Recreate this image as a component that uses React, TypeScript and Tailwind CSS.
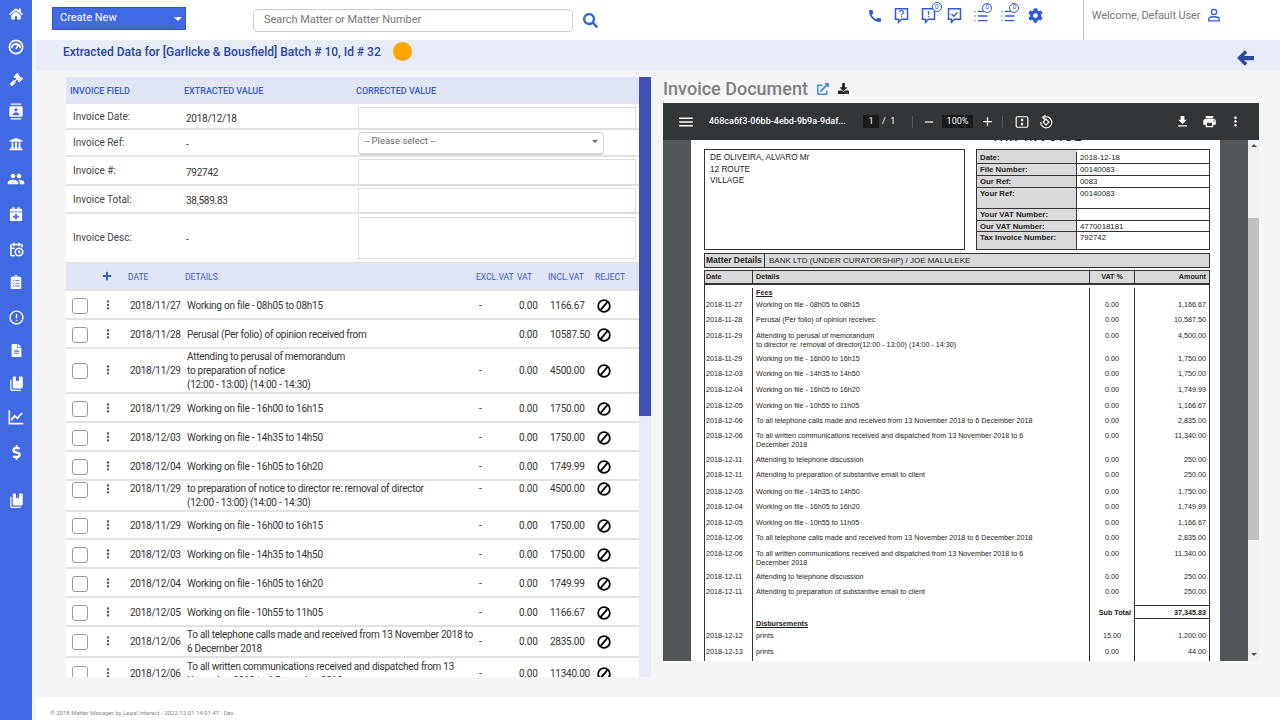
import type { ReactNode } from "react";
import { CalendarClock, List } from "lucide-react";
import {
  FaCalendarPlus,
  FaClipboardList,
  FaCog,
  FaDollarSign,
  FaDownload,
  FaExternalLinkAlt,
  FaFileAlt,
  FaGavel,
  FaHome,
  FaPlus,
  FaSearch,
  FaUniversity,
} from "react-icons/fa";
import {
  MdAdd,
  MdCall,
  MdErrorOutline,
  MdFileDownload,
  MdMenu,
  MdMoreVert,
  MdPeople,
  MdPrint,
  MdRemove,
} from "react-icons/md";

function GaugeIcon() {
  return (
    <svg width="16" height="16" viewBox="0 0 24 24" fill="none" stroke="white">
      <circle cx="12" cy="12" r="10" strokeWidth="2.5" />
      <path d="M5.5 14a6.5 6.5 0 0 1 13 0" strokeWidth="3" />
      <path d="M12 15l3-6" strokeWidth="2.5" />
    </svg>
  );
}

function ContactBookIcon() {
  return (
    <svg width="16" height="17" viewBox="0 0 24 24" fill="white">
      <path d="M4 0h16v2H4zM4 22h16v2H4z" />
      <path
        fillRule="evenodd"
        d="M4 4h16a2 2 0 0 1 2 2v12a2 2 0 0 1-2 2H4a2 2 0 0 1-2-2V6a2 2 0 0 1 2-2zm8 3a2.5 2.5 0 1 0 0 5 2.5 2.5 0 0 0 0-5zm-5 9v1.5h10V16c0-1.5-3-2.5-5-2.5S7 14.500 7 16z"
      />
    </svg>
  );
}

function DocsIcon() {
  return (
    <svg width="15" height="16" viewBox="0 0 24 24" fill="white">
      <path d="M8 0h3v8l2.500-2L16 8V0h4a2 2 0 0 1 2 2v15a2 2 0 0 1-2 2H8a2 2 0 0 1-2-2V2a2 2 0 0 1 2-2z" />
      <path d="M2 5h2v14a2 2 0 0 0 2 2h13v2H5a3 3 0 0 1-3-3z" />
    </svg>
  );
}

function ChartIcon() {
  return (
    <svg width="16" height="16" viewBox="0 0 24 24" fill="none" stroke="white" strokeWidth="2.500">
      <path d="M2 2v20h21" />
      <path d="M5 17l5-7 4 4 7-8" />
    </svg>
  );
}

function BubbleIcon({ children }: { children: ReactNode }) {
  return (
    <svg width="15" height="17" viewBox="0 0 20 22" fill="none" stroke="#2f5bd8" strokeWidth="2">
      <path d="M2 2h16v14H10l-4 4v-4H2z" />
      {children}
    </svg>
  );
}

function BanIcon() {
  return (
    <svg width="14" height="14" viewBox="0 0 24 24" fill="none" stroke="black" strokeWidth="3">
      <circle cx="12" cy="12" r="10" />
      <path d="M6 19L18 5" />
    </svg>
  );
}

function FitIcon() {
  return (
    <svg width="14" height="14" viewBox="0 0 24 24" fill="none" stroke="white" strokeWidth="2">
      <rect x="2" y="3" width="20" height="18" rx="2" />
      <path d="M12 6v3M10 8l2 2 2-2M12 18v-3M10 16l2-2 2 2" />
    </svg>
  );
}

function RotateIcon() {
  return (
    <svg width="14" height="15" viewBox="0 0 24 24" fill="none" stroke="white" strokeWidth="2">
      <path d="M8 5a9.500 9.500 0 1 1-5 8" />
      <path d="M11 1L6 5l5 4" />
      <rect x="8.500" y="9.500" width="7" height="7" transform="rotate(45 12 13)" />
    </svg>
  );
}

function BackArrow() {
  return (
    <svg width="17" height="18" viewBox="0 0 24 24" fill="#2a4aa5" className="ml-auto mr-[26px] mt-[9px]">
      <path d="M11 1L0 12l11 11 3.500-3.500L10 15h14V9H10l4.500-4.500z" />
    </svg>
  );
}

function Badge({ cls }: { cls: string }) {
  return (
    <span className={`absolute -top-[5px] flex h-[10px] w-[10px] items-center justify-center rounded-full border border-[#2f5bd8] bg-white text-[7px] leading-none ${cls}`}>
      0
    </span>
  );
}

const nav = [
  { icon: <FaHome size={14} />, cls: "h-[28px]" },
  { icon: <GaugeIcon />, cls: "h-[32px] mt-[3px]" },
  { icon: <FaGavel size={13} />, cls: "h-[32px]" },
  { icon: <ContactBookIcon />, cls: "h-[32px]" },
  { icon: <FaUniversity size={14} />, cls: "h-[32px] mt-[1px]" },
  { icon: <MdPeople size={18} />, cls: "h-[32px] mt-[3px]" },
  { icon: <FaCalendarPlus size={14} />, cls: "h-[32px] mt-[3px]" },
  { icon: <CalendarClock size={15} strokeWidth={2.5} />, cls: "h-[32px] mt-[3px]" },
  { icon: <FaClipboardList size={14} />, cls: "h-[32px] mt-[1px]" },
  { icon: <MdErrorOutline size={17} />, cls: "h-[32px] mt-[3px]" },
  { icon: <FaFileAlt size={13} />, cls: "h-[32px] mt-[1px]" },
  { icon: <DocsIcon />, cls: "h-[32px] mt-[2px]" },
  { icon: <ChartIcon />, cls: "h-[32px] mt-[1px]" },
  { icon: <FaDollarSign size={15} />, cls: "h-[32px] mt-[3px]" },
  { icon: <DocsIcon />, cls: "h-[32px] mt-[17px]" },
];

const lines = [
  { date: "2018/11/27", details: ["Working on file - 08h05 to 08h15"], excl: "-", incl: "1166.67", cls: "h-[29px] items-center pt-[2px]" },
  { date: "2018/11/28", details: ["Perusal (Per folio) of opinion received from"], excl: "", incl: "10587.50", cls: "h-[29px] items-center pt-[2px]" },
  { date: "2018/11/29", details: ["Attending to perusal of memorandum", "to preparation of notice", "(12:00 - 13:00) (14:00 - 14:30)"], excl: "-", incl: "4500.00", cls: "h-[45px] items-center" },
  { date: "2018/11/29", details: ["Working on file - 16h00 to 16h15"], excl: "-", incl: "1750.00", cls: "h-[29px] items-center pt-[2px]" },
  { date: "2018/12/03", details: ["Working on file - 14h35 to 14h50"], excl: "-", incl: "1750.00", cls: "h-[29px] items-center pt-[2px]" },
  { date: "2018/12/04", details: ["Working on file - 16h05 to 16h20"], excl: "-", incl: "1749.99", cls: "h-[29px] items-center pt-[2px]" },
  { date: "2018/11/29", details: ["to preparation of notice to director re: removal of director", "(12:00 - 13:00) (14:00 - 14:30)"], excl: "-", incl: "4500.00", cls: "h-[31px] items-start pt-[1px]" },
  { date: "2018/11/29", details: ["Working on file - 16h00 to 16h15"], excl: "-", incl: "1750.00", cls: "h-[28px] items-center pt-[2px]" },
  { date: "2018/12/03", details: ["Working on file - 14h35 to 14h50"], excl: "-", incl: "1750.00", cls: "h-[29px] items-center pt-[2px]" },
  { date: "2018/12/04", details: ["Working on file - 16h05 to 16h20"], excl: "-", incl: "1749.99", cls: "h-[29px] items-center pt-[2px]" },
  { date: "2018/12/05", details: ["Working on file - 10h55 to 11h05"], excl: "-", incl: "1166.67", cls: "h-[29px] items-center pt-[2px]" },
  { date: "2018/12/06", details: ["To all telephone calls made and received from 13 November 2018 to", "6 December 2018"], excl: "-", incl: "2835.00", cls: "h-[31px] items-center" },
  { date: "2018/12/06", details: ["To all written communications received and dispatched from 13", "November 2018 to 6 December 2018"], excl: "-", incl: "11340.00", cls: "h-[33px] items-center" },
];

const pdfRows = [
  { date: "", details: ["Fees"], vat: "", amt: "", cls: "h-[15px] pt-[3px]", head: true },
  { date: "2018-11-27", details: ["Working on file - 08h05 to 08h15"], vat: "0.00", amt: "1,166.67", cls: "h-[15px]" },
  { date: "2018-11-28", details: ["Perusal (Per folio) of opinion receivec"], vat: "0.00", amt: "10,587.50", cls: "h-[16px]" },
  { date: "2018-11-29", details: ["Attending to perusal of memorandum", "to director  re: removal of director(12:00 - 13:00) (14:00 - 14:30)"], vat: "0.00", amt: "4,500.00", cls: "h-[23px]" },
  { date: "2018-11-29", details: ["Working on file - 16h00 to 16h15"], vat: "0.00", amt: "1,750.00", cls: "h-[15px]" },
  { date: "2018-12-03", details: ["Working on file - 14h35 to 14h50"], vat: "0.00", amt: "1,750.00", cls: "h-[16px]" },
  { date: "2018-12-04", details: ["Working on file - 16h05 to 16h20"], vat: "0.00", amt: "1,749.99", cls: "h-[16px]" },
  { date: "2018-12-05", details: ["Working on file - 10h55 to 11h05"], vat: "0.00", amt: "1,166.67", cls: "h-[15px]" },
  { date: "2018-12-06", details: ["To all telephone calls made and received from 13 November 2018 to 6 December 2018"], vat: "0.00", amt: "2,835.00", cls: "h-[15px]" },
  { date: "2018-12-06", details: ["To all written communications received and dispatched from 13 November 2018 to 6", "December 2018"], vat: "0.00", amt: "11,340.00", cls: "h-[24px]" },
  { date: "2018-12-11", details: ["Attending to telephone discussion"], vat: "0.00", amt: "250.00", cls: "h-[15px]" },
  { date: "2018-12-11", details: ["Attending to preparation of substantive email to client"], vat: "0.00", amt: "250.00", cls: "h-[17px]" },
  { date: "2018-12-03", details: ["Working on file - 14h35 to 14h50"], vat: "0.00", amt: "1,750.00", cls: "h-[15px]" },
  { date: "2018-12-04", details: ["Working on file - 16h05 to 16h20"], vat: "0.00", amt: "1,749.99", cls: "h-[16px]" },
  { date: "2018-12-05", details: ["Working on file - 10h55 to 11h05"], vat: "0.00", amt: "1,166.67", cls: "h-[15px]" },
  { date: "2018-12-06", details: ["To all telephone calls made and received from 13 November 2018 to 6 December 2018"], vat: "0.00", amt: "2,835.00", cls: "h-[16px]" },
  { date: "2018-12-06", details: ["To all written communications received and dispatched from 13 November 2018 to 6", "December 2018"], vat: "0.00", amt: "11,340.00", cls: "h-[23px]" },
  { date: "2018-12-11", details: ["Attending to telephone discussion"], vat: "0.00", amt: "250.00", cls: "h-[15px]" },
  { date: "2018-12-11", details: ["Attending to preparation of substantive email to client"], vat: "0.00", amt: "250.00", cls: "h-[18px]" },
];

const pdfTail = [
  { date: "", details: ["Disbursements"], vat: "", amt: "", cls: "h-[12px]", head: true },
  { date: "2018-12-12", details: ["prints"], vat: "15.00", amt: "1,200.00", cls: "h-[16px]" },
  { date: "2018-12-13", details: ["prints"], vat: "0.00", amt: "44.00", cls: "h-[20px]" },
];

const metaRows = [
  { label: "Date:", value: "2018-12-18", cls: "h-[14px] pt-[2px]" },
  { label: "File Number:", value: "00140083", cls: "h-[12px]" },
  { label: "Our Ref:", value: "0083", cls: "h-[12px]" },
  { label: "Your Ref:", value: "00140083", cls: "h-[21px]" },
  { label: "Your VAT Number:", value: "", cls: "h-[12px]" },
  { label: "Our VAT Number:", value: "4770018181", cls: "h-[11px]" },
  { label: "Tax Invoice Number:", value: "792742", cls: "h-[17px]" },
];

function PdfRow({ row }: { row: (typeof pdfRows)[number] }) {
  return (
    <div className={`flex leading-[9.3px] ${row.cls}`}>
      <div className="w-[47px] pl-[1px]">{row.date}</div>
      <div className="w-[337px] border-l border-[#333] pl-[3px]">
        {row.details.map((d) =>
          row.head ? (
            <div key={d} className="font-bold underline">{d}</div>
          ) : (
            <div key={d} className="whitespace-nowrap">{d}</div>
          ),
        )}
      </div>
      <div className="w-[45px] border-l border-[#333] text-center">{row.vat}</div>
      <div className="flex-1 border-l border-[#333] pr-[3px] text-right">{row.amt}</div>
    </div>
  );
}

function FieldRow({
  label,
  value,
  cls,
  labelCls,
  valueCls,
  children,
}: {
  label: string;
  value: string;
  cls: string;
  labelCls: string;
  valueCls: string;
  children: ReactNode;
}) {
  return (
    <div className={`flex border-b-2 border-[#e2e2e2] bg-white text-[10px] text-[#444] ${cls}`}>
      <div className={`w-[120px] pl-[7px] ${labelCls}`}>{label}</div>
      <div className={`w-[172px] text-[10px] tracking-[-0.25px] text-[#333] ${valueCls}`}>{value}</div>
      {children}
    </div>
  );
}

export default function App() {
  return (
    <div className="flex h-[720px] w-[1280px] overflow-hidden bg-[#f5f4f6] font-['Roboto',sans-serif]">
      <aside className="flex w-[32px] shrink-0 flex-col bg-[#4169e1] text-white">
        {nav.map((n, i) => (
          <div key={i} className={`flex items-center justify-center ${n.cls}`}>
            {n.icon}
          </div>
        ))}
      </aside>

      <div className="flex min-w-0 flex-1 flex-col">
        <header className="flex h-[40px] shrink-0 items-start bg-white">
          <button className="ml-[20px] mt-[7px] flex h-[23px] w-[134px] items-center justify-between border border-[#2f55c8] bg-[#4169e1] pl-[7px] pr-[3px] text-[11px] text-white">
            Create New
            <span className="h-0 w-0 border-x-[4px] border-t-[4px] border-x-transparent border-t-white" />
          </button>
          <div className="ml-[67px] mt-[9px] flex h-[23px] w-[320px] items-center rounded border border-[#cfcfcf] pl-[10px] text-[11px] tracking-[-0.05px] text-[#777]">
            Search Matter or Matter Number
          </div>
          <FaSearch size={15} className="ml-[10px] mt-[13px] text-[#2b6fd6]" />

          <div className="ml-[269px] mt-[7px] flex h-[17px] items-center gap-[11.300px] text-[#2f5bd8]">
            <MdCall size={16} />
            <BubbleIcon>
              <path d="M7.500 6.500a2.500 2.500 0 1 1 3.500 2.500c-.7.4-1 .8-1 1.700M10 12v1.500" strokeWidth="1.500" />
            </BubbleIcon>
            <div className="relative">
              <BubbleIcon>
                <path d="M10 5v5M10 11.500v1.500" strokeWidth="1.800" />
              </BubbleIcon>
              <Badge cls="-right-[6px]" />
            </div>
            <BubbleIcon>
              <path d="M6 9l3 3 5-5" strokeWidth="1.800" />
            </BubbleIcon>
            <div className="relative">
              <List size={16} strokeWidth={2} />
              <Badge cls="-right-[3px]" />
            </div>
            <div className="relative">
              <List size={16} strokeWidth={2} />
              <Badge cls="-right-[3px]" />
            </div>
            <FaCog size={15} />
          </div>

          <div className="ml-[40px] flex h-[40px] items-start border-l border-[#bdbdbd] pl-[8px] pt-[8px] text-[11px] tracking-[-0.1px] text-[#777]">
            Welcome, Default User
            <svg width="14" height="14" viewBox="0 0 24 24" fill="none" stroke="#2f5bd8" strokeWidth="2.200" className="ml-[7px]">
              <circle cx="12" cy="7" r="4.500" />
              <path d="M3 22v-3c0-2.500 4-4 9-4s9 1.500 9 4v3z" />
            </svg>
          </div>
        </header>

        <div className="ml-[4px] flex h-[30px] shrink-0 bg-[#e8ecf6]">
          <h1 className="ml-[27px] mt-[4px] text-[12px] font-medium leading-[17px] text-[#2446a8]">
            Extracted Data for [Garlicke &amp; Bousfield] Batch # 10, Id # 32
          </h1>
          <span className="ml-[12px] mt-[2px] h-[19px] w-[19px] rounded-full bg-[#ffa500]" />
          <BackArrow />
        </div>

        <main className="ml-[4px] flex min-h-0 flex-1 pl-[30px] pt-[7px]">
          <section className="flex h-[600px] w-[585px] shrink-0">
            <div className="h-[600px] w-[573px] overflow-hidden bg-white">
              <div className="flex h-[27px] items-center border-b-2 border-[#e2e2e2] bg-[#dfe5f5] pl-[4px] pt-[5px] text-[9px] font-medium text-[#3b5bcc]">
                <span className="w-[114px]">INVOICE FIELD</span>
                <span className="w-[172px]">EXTRACTED VALUE</span>
                <span>CORRECTED VALUE</span>
              </div>

              <FieldRow label="Invoice Date:" value="2018/12/18" cls="h-[26px]" labelCls="pt-[5px]" valueCls="pt-[7px]">
                <input className="mt-[3px] h-[22px] w-[278px] border border-[#dcdcdc] bg-white" />
              </FieldRow>
              <FieldRow label="Invoice Ref:" value="-" cls="h-[27px]" labelCls="pt-[5px]" valueCls="pt-[7px]">
                <div className="mt-[2px] flex h-[23px] w-[246px] items-center justify-between rounded border border-b-2 border-[#d4d4d4] pb-[3px] pl-[5px] pr-[5px] text-[9.500px] text-[#666]">
                  -- Please select --
                  <span className="h-0 w-0 border-x-[3px] border-t-[3px] border-x-transparent border-t-[#666]" />
                </div>
              </FieldRow>
              <FieldRow label="Invoice #:" value="792742" cls="h-[29px]" labelCls="pt-[6px]" valueCls="pt-[8px]">
                <input className="mt-[2px] h-[26px] w-[278px] border border-[#dcdcdc] bg-white" />
              </FieldRow>
              <FieldRow label="Invoice Total:" value="38,589.83" cls="h-[28px]" labelCls="pt-[6px]" valueCls="pt-[7px]">
                <input className="mt-[2px] h-[25px] w-[278px] border border-[#dcdcdc] bg-white" />
              </FieldRow>
              <FieldRow label="Invoice Desc:" value="-" cls="h-[50px]" labelCls="pt-[16px]" valueCls="pt-[18px]">
                <textarea className="mt-[3px] h-[42px] w-[278px] resize-none border border-[#dcdcdc] bg-white" />
              </FieldRow>

              <div className="flex h-[27px] items-center border-b-2 border-[#e2e2e2] bg-[#dfe5f5] pt-[2px] text-[8.500px] text-[#3b5bcc]">
                <FaPlus size={10} className="mb-[4px] ml-[36px]" />
                <span className="ml-[16px] w-[57px]">DATE</span>
                <span className="w-[291px]">DETAILS</span>
                <span className="w-[41px]">EXCL.VAT</span>
                <span className="w-[31px]">VAT</span>
                <span className="w-[47px]">INCL.VAT</span>
                <span>REJECT</span>
              </div>

              {lines.map((l, i) => (
                <div
                  key={i}
                  className={`flex shrink-0 border-b-2 border-[#e2e2e2] text-[10px] tracking-[-0.25px] text-[#333] ${l.cls}`}
                >
                  <span className="ml-[6px] h-[16px] w-[16px] shrink-0 rounded-[3px] border-[1.500px] border-[#9a9a9a]" />
                  <MdMoreVert size={14} className="mb-[2px] ml-[13px] shrink-0 text-[#555]" />
                  <span className="ml-[15px] w-[57px] shrink-0 leading-[14px]">{l.date}</span>
                  <div className="w-[292px] shrink-0 leading-[14px]">
                    {l.details.map((d) => (
                      <div key={d} className="whitespace-nowrap">{d}</div>
                    ))}
                  </div>
                  <span className="w-[40px] shrink-0 leading-[14px]">{l.excl}</span>
                  <span className="w-[31px] shrink-0 leading-[14px]">0.00</span>
                  <span className="w-[47px] shrink-0 leading-[14px]">{l.incl}</span>
                  <BanIcon />
                </div>
              ))}
            </div>
            <div className="h-[600px] w-[12px] bg-[#e8ecf8]">
              <div className="h-[339px] bg-[#3f51b5]" />
            </div>
          </section>

          <section className="ml-[12px] h-[584px] w-[596px] shrink-0">
            <div className="flex h-[26px] items-center pb-[3px]">
              <h2 className="text-[18px] font-medium text-[#808080]">Invoice Document</h2>
              <FaExternalLinkAlt size={12} className="ml-[9px] text-[#3d8bdc]" />
              <FaDownload size={11} className="ml-[9px] text-[#222]" />
            </div>

            <div className="h-[558px] w-[596px] overflow-hidden bg-[#525659] font-['Liberation_Sans',sans-serif]">
              <div className="flex h-[37px] items-center bg-[#323639] font-['Roboto',sans-serif] text-white">
                <MdMenu size={18} className="ml-[14px]" />
                <span className="ml-[14px] w-[154px] text-[9px] font-medium">468ca6f3-06bb-4ebd-9b9a-9daf...</span>
                <span className="flex h-[13px] w-[16px] items-center justify-center bg-[#191b1c] text-[9px]">1</span>
                <span className="ml-[3px] w-[30px] text-[9px]">/&nbsp;&nbsp;1</span>
                <span className="h-[12px] w-px bg-[#55595c]" />
                <MdRemove size={14} className="ml-[9px]" />
                <span className="ml-[6px] flex h-[13px] w-[31px] items-center justify-center bg-[#191b1c] text-[9px]">100%</span>
                <MdAdd size={15} className="ml-[7px]" />
                <span className="ml-[7px] h-[12px] w-px bg-[#55595c]" />
                <span className="ml-[12px]"><FitIcon /></span>
                <span className="ml-[10px]"><RotateIcon /></span>
                <MdFileDownload size={15} className="ml-[122px]" />
                <MdPrint size={15} className="ml-[12px]" />
                <MdMoreVert size={15} className="ml-[11px]" />
              </div>

              <div className="flex h-[521px]">
                <div className="ml-[28px] h-[521px] w-[529px] overflow-hidden bg-white pl-[13px] text-[7.800px] text-[#222]">
                  <div className="h-[9px] overflow-hidden">
                    <div className="-mt-[8px] ml-[288px] whitespace-nowrap text-[11px] font-bold leading-[11px] tracking-[2px]">TAX INVOICE</div>
                  </div>

                  <div className="flex h-[101px] w-[506px] justify-between">
                    <div className="h-[101px] w-[261px] border border-[#333] pl-[5px] pt-[2px] text-[8.200px] leading-[11.500px]">
                      <div>DE OLIVEIRA, ALVARO Mr</div>
                      <div>12 ROUTE</div>
                      <div>VILLAGE</div>
                    </div>
                    <div className="h-[101px] w-[234px] border border-[#333]">
                      {metaRows.map((m) => (
                        <div key={m.label} className={`flex border-b border-[#333] bg-[linear-gradient(90deg,#d9d9d9_100px,white_100px)] last:border-b-0 ${m.cls}`}>
                          <div className="w-[100px] shrink-0 whitespace-nowrap border-r border-[#333] pl-[3px] font-bold leading-[11px]">{m.label}</div>
                          <div className="pl-[3px] leading-[11px]">{m.value}</div>
                        </div>
                      ))}
                    </div>
                  </div>

                  <div className="mt-[3px] flex h-[15px] w-[506px] items-center border border-[#333] bg-[#d9d9d9] text-[8px]">
                    <span className="w-[60px] border-r border-[#333] pl-[1px] text-[8.500px] font-bold leading-[13px]">Matter Details</span>
                    <span className="pl-[4px]">BANK LTD (UNDER CURATORSHIP) / JOE MALULEKE</span>
                  </div>

                  <div className="mt-[2px] w-[506px] border-x border-[#333] text-[7.200px]">
                    <div className="flex h-[15px] items-center border-y border-b-2 border-[#333] bg-[#d9d9d9] font-bold leading-[12px]">
                      <div className="w-[47px] pl-[1px]">Date</div>
                      <div className="w-[337px] border-l border-[#333] pl-[3px]">Details</div>
                      <div className="w-[45px] border-l border-[#333] text-center">VAT %</div>
                      <div className="flex-1 border-l border-[#333] pr-[3px] text-right">Amount</div>
                    </div>
                    {pdfRows.map((r, i) => (
                      <PdfRow key={i} row={r} />
                    ))}
                    <div className="flex h-[14px]">
                      <div className="w-[47px]" />
                      <div className="w-[337px] border-l border-[#333]" />
                      <div className="w-[45px] border-l border-[#333] pr-[3px] pt-[3px] text-right font-bold leading-[9.300px]">Sub Total</div>
                      <div className="flex-1 border-y border-l border-[#333] pr-[3px] pt-[2px] text-right font-bold leading-[9.300px]">37,345.83</div>
                    </div>
                    {pdfTail.map((r, i) => (
                      <PdfRow key={i} row={r} />
                    ))}
                  </div>
                </div>
                <div className="ml-[28px] flex h-[521px] w-[11px] flex-col items-center bg-[#f1f1f1] pt-[4px]">
                  <span className="h-0 w-0 border-x-[3px] border-b-[3px] border-x-transparent border-b-[#505050]" />
                  <div className="mt-[71px] h-[322px] w-full bg-[#c1c1c1]" />
                  <span className="mb-[5px] mt-auto h-0 w-0 border-x-[3px] border-t-[3px] border-x-transparent border-t-[#505050]" />
                </div>
              </div>
            </div>
          </section>
        </main>

        <footer className="ml-[4px] flex h-[23px] shrink-0 items-center bg-white pl-[14px] pt-[7px] text-[6px] text-[#888]">
          © 2018 Matter Manager by Legal Interact - 2022-12-01 14:01:47 - Dev
        </footer>
      </div>
    </div>
  );
}
